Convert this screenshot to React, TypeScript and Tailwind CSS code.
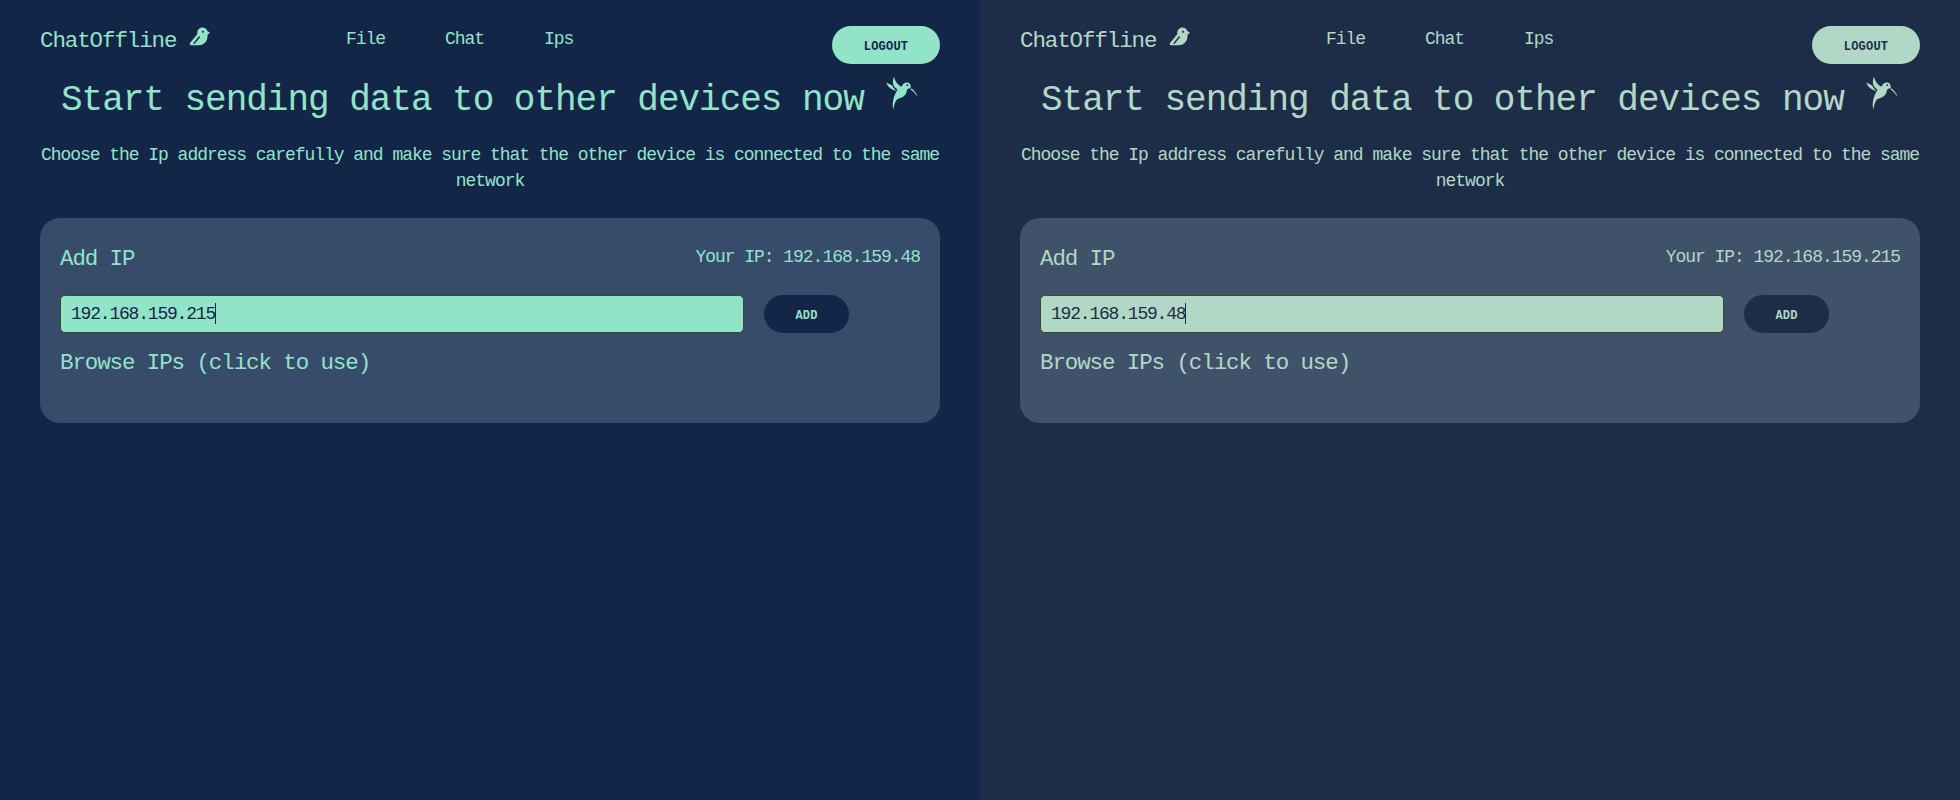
import { PiBirdFill } from "react-icons/pi";
import { GiHummingbird } from "react-icons/gi";

type Theme = {
  page: string;
  card: string;
  accent: string;
  button: string;
  field: string;
  dark: string;
  caret: string;
};

const navy: Theme = {
  page: "bg-[#142648]",
  card: "bg-[#374b6b]",
  accent: "text-[#91e4c8]",
  button: "bg-[#91e4c8] text-[#142648]",
  field: "bg-[#91e4c8] text-[#142648]",
  dark: "bg-[#142648] text-[#91e4c8]",
  caret: "bg-[#142648]",
};

const slate: Theme = {
  page: "bg-[#1e2d47]",
  card: "bg-[#405269]",
  accent: "text-[#b1d8c7]",
  button: "bg-[#b1d8c7] text-[#1e2d47]",
  field: "bg-[#b1d8c7] text-[#1e2d47]",
  dark: "bg-[#1e2d47] text-[#b1d8c7]",
  caret: "bg-[#1e2d47]",
};

const body = "text-[18px] tracking-[-1.04px] whitespace-pre";
const large = "text-[22.5px] tracking-[-1.1px] whitespace-pre";
const label = "text-[12px] tracking-[0.2px] font-bold";

function Device({ theme, own, peer }: { theme: Theme; own: string; peer: string }) {
  return (
    <section className={`h-[800px] w-[980px] px-10 ${theme.page} ${theme.accent}`}>
      <header className="flex h-[76px] items-start">
        <div className="flex w-[306px] items-start pt-[25px]">
          <span className={`${large} leading-8`}>ChatOffline</span>
          <PiBirdFill className="mt-px ml-[13px] size-[22px]" />
        </div>
        <nav className={`flex grow pt-[26px] leading-[26px] ${body}`}>
          <a className="w-[99px]">File</a>
          <a className="w-[99px]">Chat</a>
          <a>Ips</a>
        </nav>
        <button className={`mt-[26px] h-[38px] w-[108px] rounded-full pt-[4px] ${label} ${theme.button}`}>LOGOUT</button>
      </header>

      <div className="flex h-[66px] items-start pl-[21px]">
        <h1 className="text-[36px] leading-[50px] tracking-[-1.02px] whitespace-pre">
          Start sending data to other devices now
        </h1>
        <GiHummingbird className="-mt-px ml-5 size-[36px]" />
      </div>

      <p className={`h-[76px] text-center leading-[26px] ${body}`}>
        Choose the Ip address carefully and make sure that the other device is connected to the same{"\n"}network
      </p>

      <main className={`h-[205px] w-[900px] rounded-[20px] px-5 pt-[25px] ${theme.card}`}>
        <div className="flex h-[52px] items-start justify-between">
          <h2 className={`leading-8 ${large}`}>Add IP</h2>
          <span className={`pt-px leading-[26px] ${body}`}>Your IP: {own}</span>
        </div>
        <div className="flex gap-5">
          <div className={`flex h-[38px] w-[684px] items-start rounded-[5px] border border-[#3c4a2c] pt-[6px] pl-[10px] ${theme.field}`}>
            <span className="text-[18px] leading-[24px] tracking-[-1.2px] whitespace-pre">{peer}</span>
            <span className={`mt-px h-[21px] w-px ${theme.caret}`} />
          </div>
          <button className={`h-[38px] w-[85px] rounded-full pt-[4px] ${label} ${theme.dark}`}>ADD</button>
        </div>
        <h2 className={`mt-[14px] leading-8 ${large}`}>Browse IPs (click to use)</h2>
      </main>
    </section>
  );
}

export default function App() {
  return (
    <div className="flex h-[800px] w-[1960px] overflow-hidden font-['Liberation_Mono',monospace]">
      <Device theme={navy} own="192.168.159.48" peer="192.168.159.215" />
      <Device theme={slate} own="192.168.159.215" peer="192.168.159.48" />
    </div>
  );
}
